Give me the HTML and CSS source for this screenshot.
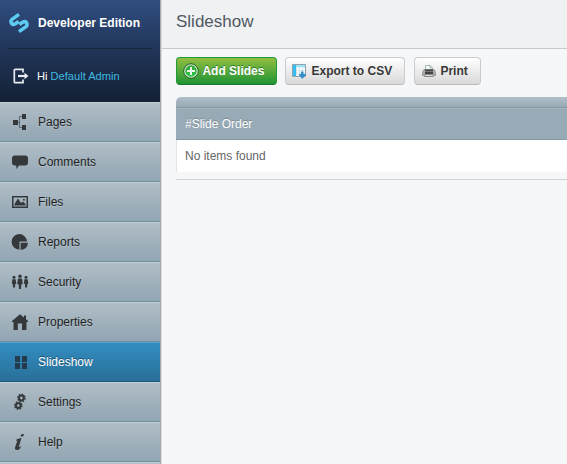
FILE: index.html
```html
<!DOCTYPE html>
<html lang="en">
<head>
<meta charset="utf-8">
<title>Slideshow</title>
<link rel="stylesheet" href="styles.css">
</head>
<body>
<div class="app">
  <aside class="sidebar">
    <header class="brand">
      <div class="brand-title">
        <svg class="logo" width="22" height="22" viewBox="0 0 22 22" fill="none" stroke="#5dcaef" stroke-width="3.6"><path d="M11 2.4 4.3 7.1C1.9 8.9 3.2 13.2 6.3 12.3Q7.7 11.9 10.6 9.4M11 19.6l6.7-4.7c2.4-1.8 1.1-6.1-2-5.2q-1.4.4-4.3 2.9"/></svg>
        <span>Developer Edition</span>
      </div>
      <div class="profile">
        <svg width="16" height="16" viewBox="0 0 16 16" fill="none" stroke="#e6ebf0" stroke-width="2"><path d="M10 4.5V1.3H2.3Q1.3 1.3 1.3 2.3v11.4q0 1 1 1H10v-3.2" stroke-width="1.7"/><path d="M5 8h8" stroke-width="2.2"/><path d="M11.5 4.7 15.5 8l-4 3.3z" fill="#e6ebf0" stroke="none"/></svg>
        <span>Hi <a>Default Admin</a></span>
      </div>
    </header>
    <nav class="menu">
      <a class="item"><svg viewBox="0 0 18 18"><path d="M2 7h5v5H2zM11 1h4v5h-4zM11 12h4v5h-4z"/><path d="M7 9.5h2M11 3.5H8.5v11H11" fill="none" stroke="#5b676f"/></svg>Pages</a>
      <a class="item"><svg viewBox="0 0 18 18"><path d="M4 2.5h10q3 0 3 3v4q0 3-3 3H8L5.5 16l-.3-3.5H4q-3 0-3-3v-4q0-3 3-3z"/></svg>Comments</a>
      <a class="item"><svg viewBox="0 0 18 18"><path d="M1 3h16v12H1zM2.5 4.5v9h13v-9z" fill-rule="evenodd"/><path d="M3.5 12.5V11L7 5.5 10 10l2-1.5 2.5 2.5v1.5z"/><path d="M12 6h1.8v1.5H12z"/></svg>Files</a>
      <a class="item"><svg viewBox="0 0 18 18"><path d="M8.5 8.5H16A7.7 7.7 0 1 0 8.5 16.5z"/><path d="M9.7 9.7H17q-.6 6.5-7.3 7.3z"/></svg>Reports</a>
      <a class="item"><svg viewBox="0 0 18 18"><circle cx="9" cy="3.3" r="1.7"/><circle cx="3" cy="4.3" r="1.5"/><circle cx="15" cy="4.3" r="1.5"/><path d="M7 5.5h4l.8 5.5-1.5.5L10 16H8l-.3-4.5L6.2 11zM1.3 6.2h3.4l.6 4.5-1 .4L4 14.5H2l-.2-3.4-1-.4zM13.3 6.2h3.4l.6 4.5-1 .4-.2 3.4h-2l-.1-3.4-1-.4z"/></svg>Security</a>
      <a class="item"><svg viewBox="0 0 18 18"><path d="M9 1.3 1 8v1h1.5v8h4.3v-6.5h4.2V17h4.5V9H17V8l-2-1.7V2.5h-2v2z"/></svg>Properties</a>
      <a class="item active"><svg viewBox="0 0 18 18"><path d="M4 3h5v6H4zM11 3h5v6h-5zM4 10h5v6H4zM11 10h5v6h-5z"/></svg>Slideshow</a>
      <a class="item"><svg viewBox="0 0 18 18" fill="none" stroke="#34383b"><g class="gears"><circle cx="10.4" cy="5" r="2.4" stroke-width="2"/><circle cx="10.4" cy="5" r="3.7" stroke-width="1.4" stroke-dasharray="1.45 1.45"/><circle cx="7.3" cy="12.6" r="2.4" stroke-width="2"/><circle cx="7.3" cy="12.6" r="3.7" stroke-width="1.4" stroke-dasharray="1.45 1.45"/></g></svg>Settings</a>
      <a class="item"><svg viewBox="0 0 18 18"><path d="M10 1.5 13 1l-.6 2.2-2.8.4zM5.7 6.2 10.5 5 8 13q-.4 1.5.5 1.1l1.6-1q-1 4-4 4-2.8-.2-2-2.8L6.5 7.6 5 8z"/></svg>Help</a>
      <a class="item"></a>
    </nav>
  </aside>
  <main class="content">
    <header class="page-header"><h1>Slideshow</h1></header>
    <div class="toolbar">
      <button class="btn add"><svg width="16" height="16" viewBox="0 0 16 16"><defs><linearGradient id="plus" x2="0" y2="1"><stop stop-color="#35a735"/><stop offset="1" stop-color="#28c845"/></linearGradient></defs><circle cx="8" cy="8" r="7.2" fill="#205f23" stroke="#205f23"/><circle cx="8" cy="8" r="6.3" fill="url(#plus)" stroke="#dce8d9" stroke-width="1.1"/><path d="M8 4v8M4 8h8" stroke="#f4fff2" stroke-width="2"/></svg>Add Slides</button>
      <button class="btn export"><svg width="16" height="16" viewBox="0 0 16 16"><path d="M1.5 1.5h13v12h-13z" fill="#fff" stroke="#8da4ae"/><path d="M2 2h12v2.5H2z" fill="#a0e1f7"/><path d="M2 2h3v11H2z" fill="#36bdf0"/><path d="M5.5 5v8M8.5 5v8M11.5 5v8M5 7.5h9M5 10h9" stroke="#d3e1e5"/><path d="M10 8.5h2.5V11H15.3L11.3 16 7.3 11H10z" fill="#348dc8"/></svg>Export to CSV</button>
      <button class="btn print"><svg width="16" height="16" viewBox="0 0 16 16"><path d="M4.5 7V2.5H9L11.5 5v2" fill="#f6faf8" stroke="#9dbbb2"/><path d="M9 2.5V5h2.5" fill="none" stroke="#9dbbb2"/><path d="M3 6.5h10l1.5 3v3h-13v-3z" fill="#aaa" stroke="#999"/><path d="M4 6.5h8v5H4z" fill="#454545"/><path d="M4 8.5h8" stroke="#777"/><path d="M4 11.5h8l.5 2h-9z" fill="#d8dfda" stroke="#888"/></svg>Print</button>
    </div>
    <section class="grid">
      <div class="grid-title"></div>
      <div class="grid-head">#Slide Order</div>
      <div class="grid-row">No items found</div>
      <div class="grid-foot"></div>
    </section>
  </main>
</div>
</body>
</html>
```

FILE: styles.css
```css
* { box-sizing: border-box; }
body { margin: 0; font: 12px/16px "Liberation Sans", Arial, sans-serif; color: #1f1f1f; background: #f5f7f9; }
.app { display: flex; height: 464px; overflow: hidden; }
.sidebar { flex: none; width: 162px; border-right: 1px solid #dcdee0; box-shadow: inset -1px 0 #a5a7aa; padding-right: 1px; }
.brand { height: 102px; padding: 0 8px; background: linear-gradient(#304e80, #213557 50%, #142136); border-bottom: 1px solid #15202f; }
.brand-title { display: flex; align-items: center; height: 49px; padding-bottom: 3px; border-bottom: 1px solid #19273c; color: #fff; font-weight: bold; }
.logo { margin-right: 8px; }
.profile { display: flex; align-items: center; height: 54px; padding-left: 5px; font-size: 11.1px; color: #fff; }
.profile svg { margin-right: 8px; }
.profile a { color: #3ebae0; }
.item { display: flex; align-items: center; height: 40px; padding-left: 11px; border-top: 1px solid #c1cfd7; border-bottom: 1px solid #748d9d; background: linear-gradient(#b0bec7, #92a5b2); text-shadow: 0 1px 0 rgba(191, 201, 208, .6); }
.item svg { width: 18px; height: 18px; margin-right: 9px; fill: #34383b; }
.gears { fill: none; }
.item.active { color: #fff; background: linear-gradient(#338dc1, #287099); border-top-color: #55a4d2; border-bottom-color: #1f5979; text-shadow: 0 -1px 0 #1e5270; }
.item.active svg { fill: #233b4a; }
.content { flex: 1; min-width: 0; }
.page-header { height: 49px; padding: 11px 14px; background: #eff1f3; border-bottom: 1px solid #c8cacc; }
h1 { margin: 0; font-size: 17px; line-height: 21px; font-weight: normal; color: #4f5861; }
.toolbar { display: flex; gap: 8px; padding: 8px 14px 12px; }
.btn { display: flex; align-items: center; height: 28px; padding: 0; border: 1px solid #c9cbcd; border-bottom-color: #b9bbbd; border-radius: 4px; background: linear-gradient(#fff, #d9d9d9); font: bold 12px/16px "Liberation Sans", Arial, sans-serif; color: #393939; white-space: nowrap; }
.btn svg { flex: none; margin: 0 3.4px 0 6px; }
.add { width: 101px; color: #fff; border-color: #229a38 #229a38 #1b7830; background: linear-gradient(#93be42, #1f9433); text-shadow: 0 -1px 0 #287c2c; }
.export { width: 120px; }
.export svg { margin-left: 5px; margin-right: 4.5px; }
.print { width: 67px; margin-left: 1px; }
.print svg { margin-right: 3.4px; }
.grid { margin-left: 14px; }
.grid-title { height: 11px; border-bottom: 1px solid #8799a5; border-top-left-radius: 5px; background: linear-gradient(#b0bec7, #98aab6); }
.grid-head { height: 32px; padding: 7px 9px; color: #fff; background: #98aab6; border-top: 1px solid #a5b5bf; border-bottom: 1px solid #8399a7; text-shadow: 0 -1px 0 #788995; }
.grid-row { height: 32px; padding: 8px; border-left: 1px solid #e2e4e6; background: #fff; color: #666; }
.grid-foot { height: 8px; border-bottom: 1px solid #d0d2d4; }
```
